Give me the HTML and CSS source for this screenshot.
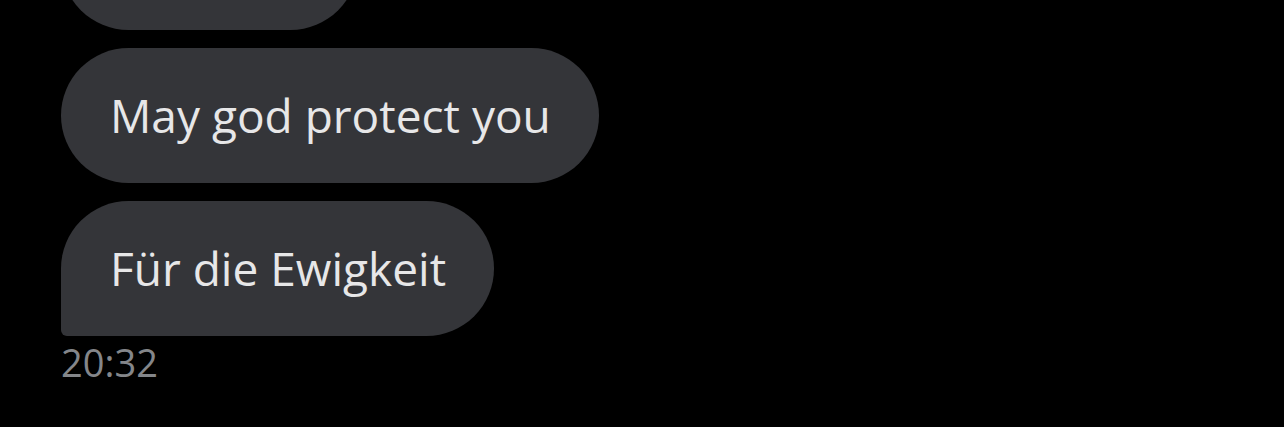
FILE: index.html
```html
<!DOCTYPE html>
<html lang="en">
<head>
    <meta charset="UTF-8">
    <meta name="viewport" content="width=device-width, initial-scale=1.0">
    <title>Messages</title>
    <link rel="stylesheet" href="styles.css">
</head>
<body>
    <div class="thread">
        <!-- received group, scrolled so the first bubble is cut at the top -->
        <div class="bubble clipped"></div>
        <div class="bubble">May god protect you</div>
        <div class="bubble last">Für die Ewigkeit</div>
        <div class="time">20:32</div>
    </div>
</body>
</html>
```

FILE: styles.css
```css
html,
body{
    margin: 0;
    background-color: #000;
}
body{
    height: 427px;
    overflow: hidden;
    font-family: "Open Sans", "Liberation Sans", sans-serif;
}
.thread{
    display: flex;
    flex-direction: column;
    align-items: flex-start;
    gap: 18px;
    margin-top: -105px;
    padding-left: 61px;
}
.bubble{
    padding: 39px 48px 39px 49px;
    font-size: 46px;
    line-height: 57px;
    color: #e7e7e8;
    background-color: #343539;
    border-radius: 68px;
    white-space: nowrap;
}
/* first message of the group, only its bottom is in view */
.bubble.clipped{
    width: 200px;
    height: 57px;
}
.bubble.last{
    border-bottom-left-radius: 6px;
}
.time{
    margin-top: -14px;
    font-size: 38px;
    line-height: 44px;
    color: #84868a;
}
```
